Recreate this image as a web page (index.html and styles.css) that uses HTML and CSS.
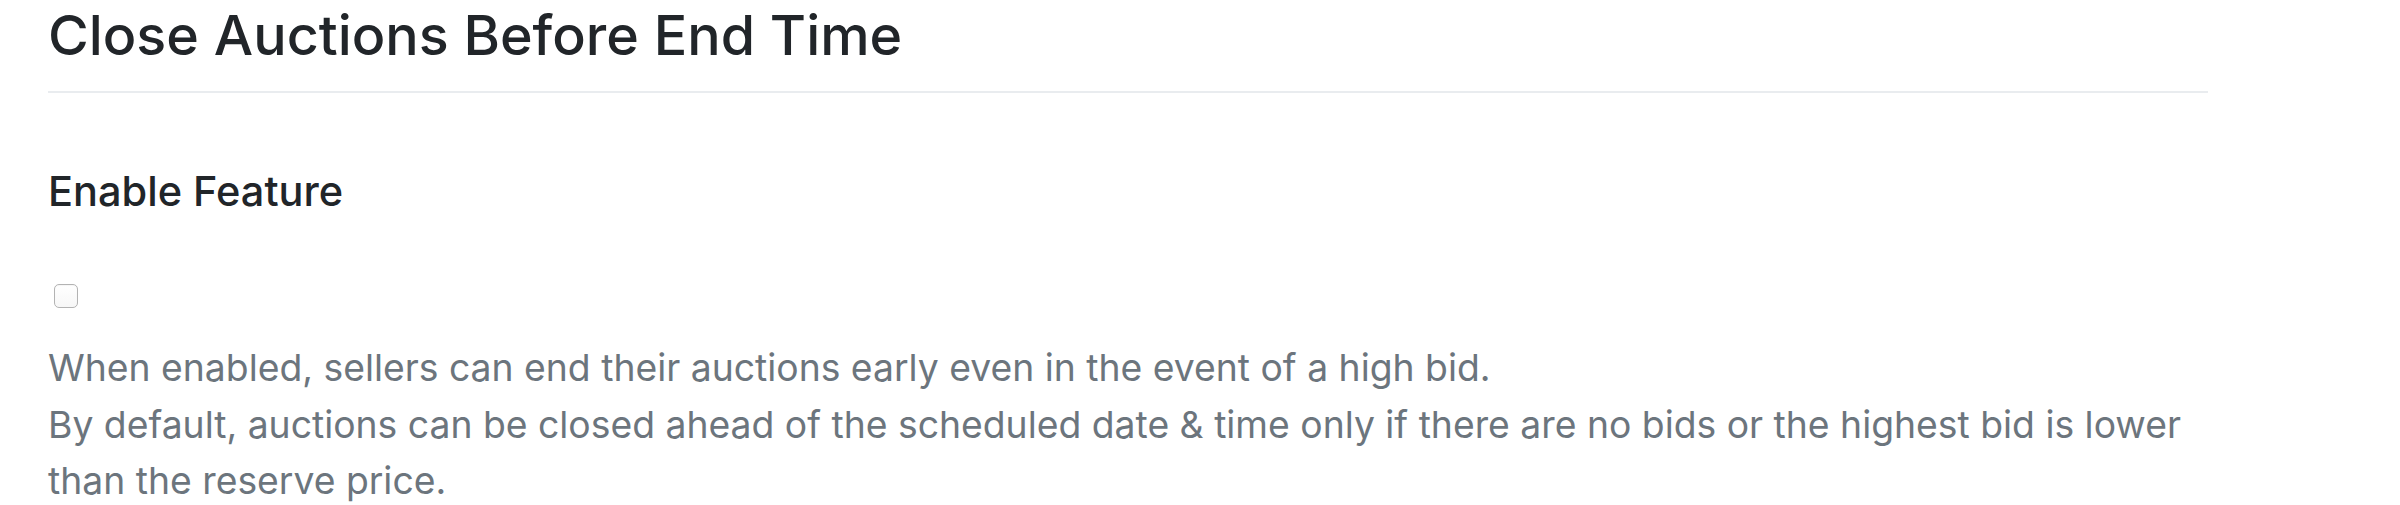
FILE: index.html
```html
<!DOCTYPE html>
<html lang="en">
<head>
<meta charset="utf-8">
<title>Close Auctions Before End Time</title>
<link rel="stylesheet" href="styles.css">
</head>
<body>
<main class="page">
  <h1 class="page-title">Close Auctions Before End Time</h1>
  <hr class="divider">
  <section class="setting">
    <label class="setting-label" for="enable-feature">Enable Feature</label>
    <div class="check-row">
      <input class="check" type="checkbox" id="enable-feature">
    </div>
    <p class="help">When enabled, sellers can end their auctions early even in the event of a high bid.<br>By default, auctions can be closed ahead of the scheduled date &amp; time only if there are no bids or the highest bid is lower than the reserve price.</p>
  </section>
</main>
</body>
</html>
```

FILE: styles.css
```css
html, body {
  margin: 0;
  padding: 0;
  background: #ffffff;
}

body {
  font-family: Inter, "Liberation Sans", sans-serif;
  color: #212529;
}

.page {
  width: 2160px;
  padding-left: 48px;
  padding-top: 1px;
}

.page-title {
  margin: 0;
  font-size: 55.6px;
  line-height: 67px;
  font-weight: 500;
  color: #212529;
}

.divider {
  margin: 23px 0 0 0;
  border: 0;
  border-top: 2px solid #e9ecef;
  height: 0;
}

.setting {
  display: flex;
  flex-direction: column;
  align-items: flex-start;
  padding-top: 73px;
}

.setting-label {
  display: block;
  font-size: 41.5px;
  line-height: 50px;
  font-weight: 500;
  color: #212529;
}

.check-row {
  display: flex;
  padding-top: 68px;
  padding-left: 6px;
}

.check {
  appearance: none;
  -webkit-appearance: none;
  margin: 0;
  width: 24px;
  height: 24px;
  box-sizing: border-box;
  border: 1.5px solid #b3b3b3;
  border-radius: 5px;
  background: linear-gradient(#ffffff, #f7f7f7);
  box-shadow: inset 0 1px 1px rgba(0, 0, 0, 0.04);
}

.help {
  margin: 32px 0 0 0;
  font-size: 37.3px;
  line-height: 56.5px;
  color: #6c757d;
}
```
